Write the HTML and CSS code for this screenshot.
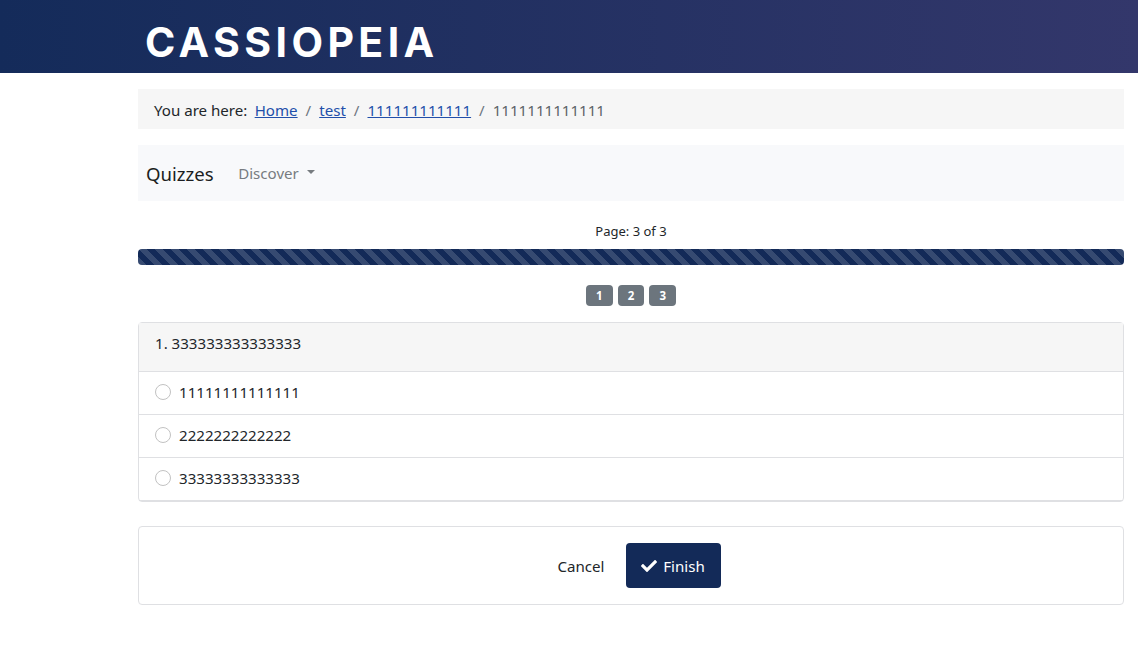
FILE: index.html
```html
<!DOCTYPE html>
<html lang="en">
<head>
<meta charset="utf-8">
<title>Quizzes</title>
<link rel="stylesheet" href="styles.css">
</head>
<body>
<header class="site-header">
  <div class="logo">CASSIOPEIA</div>
</header>
<main class="content">
  <nav class="breadcrumb">
    <span class="here">You are here:</span>
    <a href="#">Home</a><span class="sep">/</span>
    <a href="#">test</a><span class="sep">/</span>
    <a href="#">111111111111</a><span class="sep">/</span>
    <span class="current">1111111111111</span>
  </nav>
  <div class="navbar">
    <span class="brand">Quizzes</span>
    <span class="discover">Discover<i class="caret"></i></span>
  </div>
  <div class="page-label">Page: 3 of 3</div>
  <div class="progress"></div>
  <div class="pages">
    <span class="badge">1</span><span class="badge">2</span><span class="badge">3</span>
  </div>
  <section class="card question">
    <div class="card-head">1. 333333333333333</div>
    <label class="option"><i class="radio"></i>11111111111111</label>
    <label class="option"><i class="radio"></i>2222222222222</label>
    <label class="option"><i class="radio"></i>33333333333333</label>
  </section>
  <section class="card actions">
    <a class="cancel" href="#">Cancel</a>
    <button class="finish" type="button">
      <svg class="check" viewBox="0 0 512 512" aria-hidden="true"><path d="M173.9 439.4 7.5 273c-10-10-10-26.200 0-36.200l36.200-36.200c10-10 26.200-10 36.200 0L192 312.700 432.100 72.600c10-10 26.200-10 36.200 0l36.200 36.200c10 10 10 26.200 0 36.200L210.100 439.400c-10 10-26.200 10-36.200 0z" fill="currentColor"/></svg>
      Finish
    </button>
  </section>
</main>
</body>
</html>
```
FILE: styles.css
```css
* { box-sizing: border-box; }
html, body { margin: 0; height: 100%; overflow: hidden; }
body {
  background: #fff;
  color: #22262a;
  font-family: "Noto Sans", "Open Sans", sans-serif;
  font-size: 15.100px;
  line-height: 24px;
}
.site-header {
  height: 73px;
  padding-left: 145px;
  background: linear-gradient(90deg, #142b5a 0%, #33376b 100%);
  display: flex;
  align-items: center;
}
.logo {
  color: #fff;
  font-family: Inter, sans-serif;
  font-weight: 700;
  font-size: 41px;
  line-height: 1;
  letter-spacing: 4.400px;
  padding-top: 12px;
}
.content {
  margin: 16px 14px 0 138px;
  display: flex;
  flex-direction: column;
}
.breadcrumb {
  height: 40px;
  padding: 1px 16px 0;
  background: #f6f6f6;
  display: flex;
  align-items: center;
  white-space: nowrap;
}
.here { margin-right: 7.300px; }
.breadcrumb a { color: #224faa; }
.sep { color: #6d757e; margin: 0 8px; }
.current { color: #5c6268; }
.navbar {
  margin-top: 16px;
  height: 56px;
  padding: 0 8px;
  background: #f8f9fb;
  display: flex;
  align-items: center;
}
.brand { font-size: 18.600px; color: #1b1e21; margin-right: 24.500px; padding-top: 2px; }
.discover { color: #777c80; display: flex; align-items: center; }
.caret {
  margin-left: 8px;
  border-top: 4.500px solid #777c80;
  border-left: 4.500px solid transparent;
  border-right: 4.500px solid transparent;
  margin-bottom: 2px;
}
.page-label {
  margin-top: 19px;
  height: 21px;
  text-align: center;
  font-size: 13px;
  line-height: 22px;
  margin-bottom: 8px;
}
.progress {
  height: 16px;
  border-radius: 4px;
  background-color: #132a58;
  background-image: linear-gradient(45deg, #364a71 25%, transparent 25%, transparent 50%, #364a71 50%, #364a71 75%, transparent 75%, transparent);
  background-size: 16px 16px;
}
.pages {
  margin-top: 20px;
  display: flex;
  justify-content: center;
  gap: 5px;
}
.badge {
  width: 26.700px;
  height: 21px;
  border-radius: 4px;
  background: #6c757d;
  color: #fff;
  font-size: 11.500px;
  font-weight: 700;
  line-height: 21px;
  text-align: center;
}
.card {
  border: 1px solid #dfe0e3;
  border-radius: 4px;
  background: #fff;
}
.question { margin-top: 16px; height: 180px; display: flex; flex-direction: column; }
.card-head {
  height: 49px;
  padding: 8px 16px 0;
  background: #f6f6f6;
  border-bottom: 1px solid #dfe0e3;
}
.option {
  height: 43px;
  padding: 0 0 2px 16px;
  display: flex;
  align-items: center;
  border-bottom: 1px solid #dfe0e3;
}
.radio {
  width: 16px;
  height: 16px;
  margin-right: 8px;
  border: 1px solid #c2c2c2;
  border-radius: 50%;
  background: #fff;
}
.actions {
  margin-top: 24px;
  height: 79px;
  padding-left: 16px;
  display: flex;
  justify-content: center;
  align-items: center;
}
.cancel {
  color: #22262a;
  text-decoration: none;
  margin-right: 21px;
}
.finish {
  width: 95px;
  height: 45px;
  border: 0;
  border-radius: 4px;
  background: #132a58;
  color: #fff;
  font: inherit;
  display: flex;
  align-items: center;
  justify-content: center;
  gap: 6px;
}
.check { width: 16px; height: 16px; }
```
